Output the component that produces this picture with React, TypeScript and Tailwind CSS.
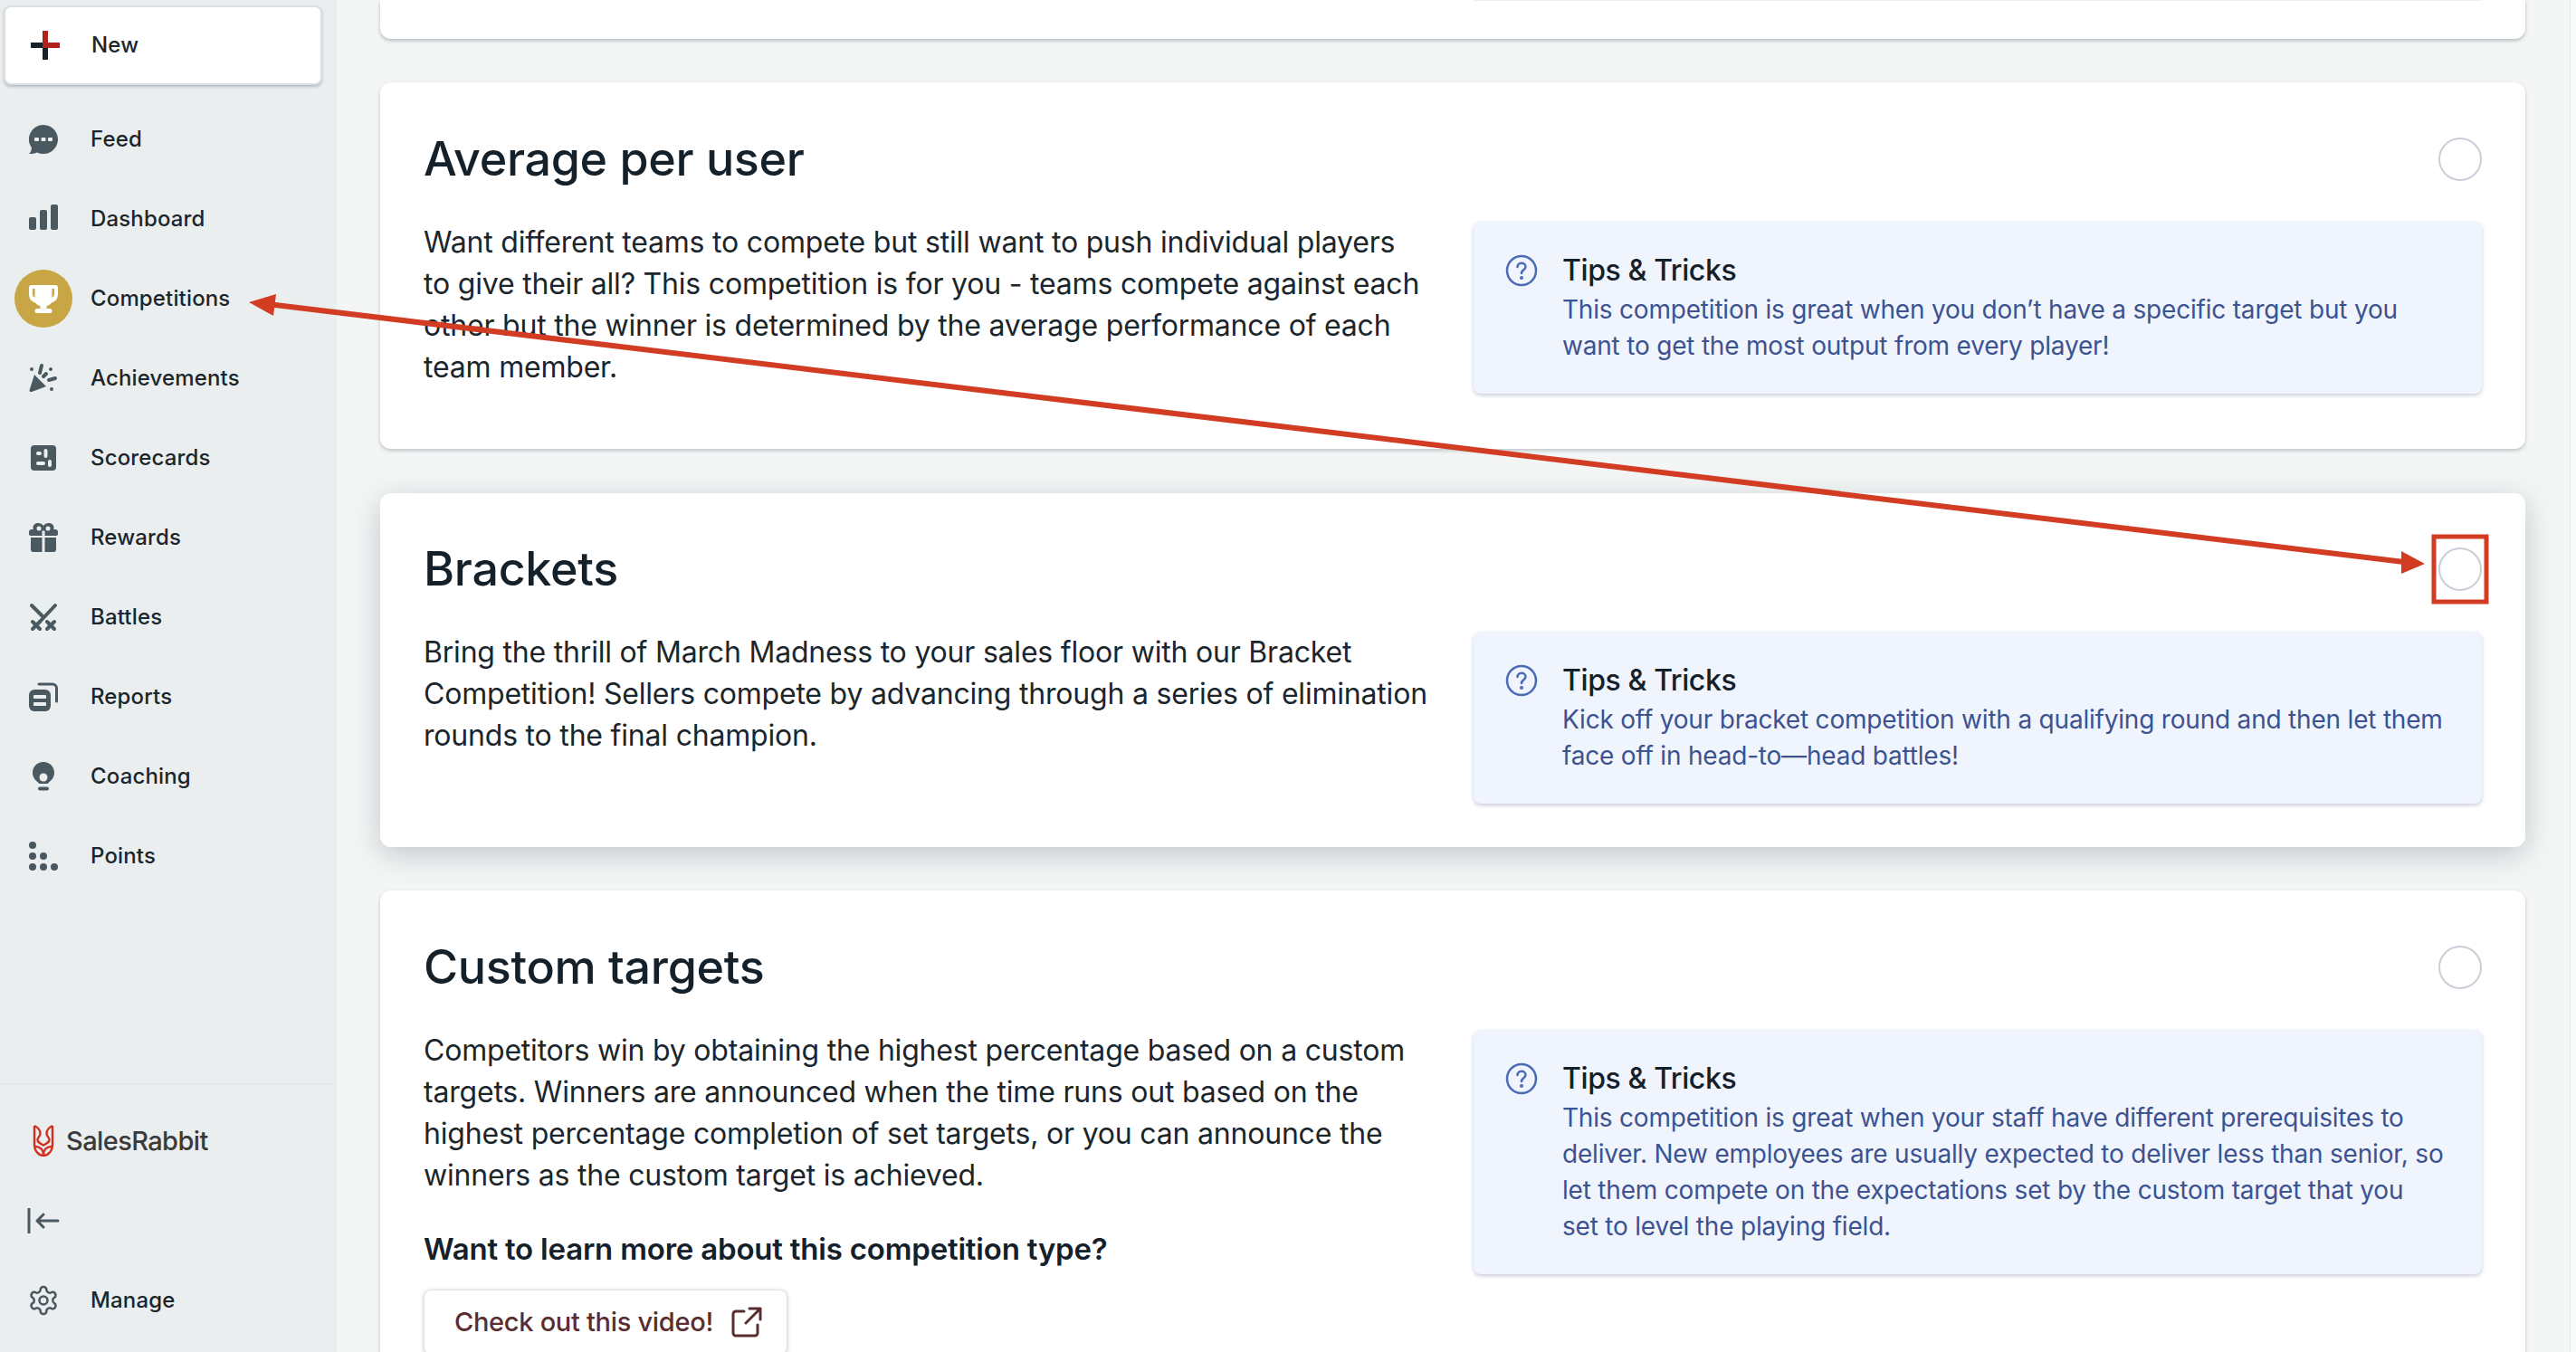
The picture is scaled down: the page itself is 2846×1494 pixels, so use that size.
import type { ReactNode } from "react";

const ink = "#4a5860";

function FeedIcon() {
  return (
    <svg width="32" height="32" viewBox="0 0 32 32">
      <path fill={ink} d="M16 0a16 16 0 1 1-7 30.4C6.5 31.300 3 32 0 32c1.800-1.600 3-4 2.900-6.800A16 16 0 0 1 16 0z" />
      <rect x="6" y="14" width="5" height="4" rx="1" fill="#ebeeef" />
      <rect x="13.500" y="14" width="5" height="4" rx="1" fill="#ebeeef" />
      <rect x="21" y="14" width="5" height="4" rx="1" fill="#ebeeef" />
    </svg>
  );
}

function DashboardIcon() {
  return (
    <svg width="32" height="32" viewBox="0 0 32 32" fill={ink}>
      <rect x="0" y="14" width="8" height="14" rx="2" />
      <rect x="12" y="6" width="8" height="22" rx="2" />
      <rect x="24" y="0" width="8" height="28" rx="2" />
    </svg>
  );
}

function TrophyIcon() {
  return (
    <svg width="32" height="34" viewBox="0 0 32 34" fill="none">
      <path fill="#fff" d="M3 2h26a3 3 0 0 1 3 3v7c0 5-3 8.500-7 9.500-1.300 1.700-3 2.900-5.500 3.500v3H23a2 2 0 0 1 0 5H9a2 2 0 0 1 0-5h3.500v-3c-2.500-.6-4.200-1.800-5.500-3.500C3 20.500 0 17 0 12V5a3 3 0 0 1 3-3z" />
      <path fill="#c8a645" d="M4 6h2.500v10C5 15 4 13.500 4 12zM25.500 6H28v6c0 1.500-1 3-2.500 4z" />
    </svg>
  );
}

function PartyIcon() {
  return (
    <svg width="32" height="32" viewBox="0 0 32 32" fill={ink}>
      <path d="M6 12l13 13L3 31c-1.600.5-2.800-.8-2.300-2.300z" strokeLinejoin="round" />
      <circle cx="3" cy="6" r="2" />
      <circle cx="24" cy="6" r="2" />
      <circle cx="25" cy="28" r="2" />
      <path d="M12 10l2-8" stroke={ink} strokeWidth="4" strokeLinecap="round" />
      <path d="M16 14l3-3" stroke={ink} strokeWidth="4" strokeLinecap="round" />
      <path d="M22 18l7-2" stroke={ink} strokeWidth="4" strokeLinecap="round" />
    </svg>
  );
}

function ScorecardIcon() {
  return (
    <svg width="32" height="32" viewBox="0 0 32 32">
      <rect x="2" y="2" width="28" height="28" rx="4" fill={ink} />
      <rect x="8" y="9" width="6" height="4" rx="2" fill="#ebeeef" />
      <rect x="16.500" y="6" width="4" height="10" rx="2" fill="#ebeeef" />
      <rect x="8" y="20" width="10" height="4" rx="2" fill="#ebeeef" />
      <rect x="21" y="18" width="4" height="8" rx="2" fill="#ebeeef" />
    </svg>
  );
}

function GiftIcon() {
  return (
    <svg width="32" height="32" viewBox="0 0 32 32" fill={ink}>
      <path d="M10 0c2.600 0 4.800 1.200 6 3.100C17.200 1.200 19.400 0 22 0c3.300 0 5.500 2.300 5.500 5 0 .7-.1 1.400-.4 2H29a3 3 0 0 1 3 3v2a2 2 0 0 1-2 2H17.500V8.500h-3V14H2a2 2 0 0 1-2-2v-2a3 3 0 0 1 3-3h1.900c-.3-.6-.4-1.300-.4-2 0-2.700 2.200-5 5.500-5z" />
      <path d="M2 16h12.500v16H5a3 3 0 0 1-3-3zM17.500 16H30v13a3 3 0 0 1-3 3h-9.500z" />
      <circle cx="11" cy="6" r="2.500" fill="#ebeeef" />
      <circle cx="21" cy="6" r="2.500" fill="#ebeeef" />
    </svg>
  );
}

function SwordsIcon() {
  return (
    <svg width="32" height="32" viewBox="0 0 32 32" fill="none" stroke={ink} strokeWidth="4" strokeLinecap="round">
      <path d="M3 3l13 13" />
      <path d="M29 3L12 21" />
      <path d="M4 21l8 8M12 21l-8 8" />
      <path d="M20 21l8 8M28 21l-8 8" />
    </svg>
  );
}

function ReportsIcon() {
  return (
    <svg width="32" height="32" viewBox="0 0 32 32" fill="none">
      <rect x="0" y="8" width="24" height="24" rx="6" fill={ink} />
      <rect x="5" y="14" width="14" height="4" rx="1" fill="#ebeeef" />
      <rect x="5" y="22" width="14" height="4" rx="1" fill="#ebeeef" />
      <path d="M11 2h15a4.500 4.500 0 0 1 4.500 4.500V21" stroke={ink} strokeWidth="3" strokeLinecap="round" />
    </svg>
  );
}

function BulbIcon() {
  return (
    <svg width="32" height="32" viewBox="0 0 32 32" fill={ink}>
      <path d="M16 0c7 0 12 5.200 12 11.800 0 4.600-2.500 8.200-6 10.600-.7.500-1 1-1 1.600H11c0-.6-.3-1.100-1-1.600-3.500-2.400-6-6-6-10.600C4 5.200 9 0 16 0z" />
      <circle cx="16" cy="17" r="4.500" fill="#ebeeef" />
      <rect x="10" y="27.500" width="12" height="4" rx="2" />
    </svg>
  );
}

function PointsIcon() {
  return (
    <svg width="32" height="32" viewBox="0 0 32 32" fill={ink}>
      <circle cx="4" cy="4" r="4" />
      <circle cx="4" cy="16" r="4" />
      <circle cx="16" cy="16" r="4" />
      <circle cx="4" cy="28" r="4" />
      <circle cx="16" cy="28" r="4" />
      <circle cx="28" cy="28" r="4" />
    </svg>
  );
}

function HelpIcon() {
  return (
    <svg width="36" height="36" viewBox="0 0 36 36" fill="none" stroke="#4a6bb5" strokeWidth="2.500" strokeLinecap="round">
      <circle cx="18" cy="18" r="16" />
      <path d="M13.500 14c0-2.600 2-4.300 4.500-4.300s4.500 1.700 4.500 4c0 3.600-4.500 3.600-4.500 7.300" />
      <circle cx="18" cy="26" r="0.800" fill="#4a6bb5" />
    </svg>
  );
}

const navItems: { label: string; icon: ReactNode; active?: boolean }[] = [
  { label: "Feed", icon: <FeedIcon /> },
  { label: "Dashboard", icon: <DashboardIcon /> },
  { label: "Competitions", icon: <TrophyIcon />, active: true },
  { label: "Achievements", icon: <PartyIcon /> },
  { label: "Scorecards", icon: <ScorecardIcon /> },
  { label: "Rewards", icon: <GiftIcon /> },
  { label: "Battles", icon: <SwordsIcon /> },
  { label: "Reports", icon: <ReportsIcon /> },
  { label: "Coaching", icon: <BulbIcon /> },
  { label: "Points", icon: <PointsIcon /> },
];

function Sidebar() {
  return (
    <aside className="flex h-full w-[372px] shrink-0 flex-col bg-[#ebeeef] text-[24px] font-medium tracking-[0.15px] text-[#1b262c]">
      <div className="ml-[4px] mt-[6px] flex h-[88px] w-[352px] items-center rounded-lg border-2 border-[#d9dfe2] bg-white shadow-[0_2px_3px_rgba(60,75,85,0.3)]">
        <span className="relative ml-[28px] h-8 w-8">
          <span className="absolute left-0 top-[13px] h-[6px] w-8 bg-[#14202a]" />
          <span className="absolute left-[13px] top-0 h-8 w-[6px] bg-[#14202a]" />
          <span className="absolute left-[13px] top-[13px] h-[6px] w-[19px] bg-[#b0231a]" />
          <span className="absolute left-[13px] top-0 h-[19px] w-[6px] bg-[#b0231a]" />
        </span>
        <span className="ml-[35px]">New</span>
      </div>
      <nav className="mt-[16px] flex flex-col">
        {navItems.map((item) => (
          <div key={item.label} className="flex h-[88px] items-center">
            <span className="flex w-[100px] justify-center pr-[4px]">
              {item.active ? (
                <span className="flex h-16 w-16 items-center justify-center rounded-full bg-[#c8a645]">{item.icon}</span>
              ) : (
                item.icon
              )}
            </span>
            <span>{item.label}</span>
          </div>
        ))}
      </nav>
      <div className="mt-auto border-t-2 border-[#e3e8ec] pb-[39px]">
        <div className="mt-[43px] flex items-center pl-[36px]">
          <svg width="24" height="36" viewBox="0 0 24 36" fill="none" stroke="#d22f1f" strokeWidth="2.400" strokeLinejoin="round">
            <path d="M2 2c4 2 6.500 5 6.500 8.500 0 3-3 4.500-3 7 0 2.500 2 3.500 6.500 6 4.500-2.500 6.500-3.500 6.500-6 0-2.500-3-4-3-7C15.500 7 18 4 22 2" />
            <path d="M2 2v21c0 7 5 12 10 12s10-5 10-12V2" />
            <path d="M3 25c5 0 9 3 9 10M21 25c-5 0-9 3-9 10" />
          </svg>
          <span className="ml-[13px] text-[29px] font-medium leading-none tracking-[-0.6px] text-[#3a3a3c]">SalesRabbit</span>
        </div>
        <svg className="ml-[30px] mt-[57px]" width="36" height="28" viewBox="0 0 36 28" fill="none" stroke={ink} strokeWidth="3" strokeLinecap="round" strokeLinejoin="round">
          <path d="M2 1v26" />
          <path d="M34 14H11M18 7l-7 7 7 7" />
        </svg>
        <div className="mt-[56px] flex h-[36px] items-center">
          <svg className="ml-[30px]" width="36" height="36" viewBox="0 0 24 24" fill="none" stroke={ink} strokeWidth="1.700" strokeLinecap="round" strokeLinejoin="round">
            <path d="M12.220 2h-.44a2 2 0 0 0-2 2v.18a2 2 0 0 1-1 1.730l-.43.250a2 2 0 0 1-2 0l-.15-.08a2 2 0 0 0-2.730.730l-.22.380a2 2 0 0 0 .730 2.730l.15.100a2 2 0 0 1 1 1.720v.510a2 2 0 0 1-1 1.740l-.15.090a2 2 0 0 0-.730 2.730l.22.380a2 2 0 0 0 2.730.730l.15-.08a2 2 0 0 1 2 0l.43.250a2 2 0 0 1 1 1.730V20a2 2 0 0 0 2 2h.44a2 2 0 0 0 2-2v-.18a2 2 0 0 1 1-1.730l.43-.25a2 2 0 0 1 2 0l.15.080a2 2 0 0 0 2.730-.730l.22-.390a2 2 0 0 0-.730-2.730l-.15-.08a2 2 0 0 1-1-1.740v-.5a2 2 0 0 1 1-1.740l.15-.09a2 2 0 0 0 .730-2.730l-.22-.380a2 2 0 0 0-2.730-.730l-.15.080a2 2 0 0 1-2 0l-.43-.25a2 2 0 0 1-1-1.730V4a2 2 0 0 0-2-2z" />
            <circle cx="12" cy="12" r="3" />
          </svg>
          <span className="ml-[34px]">Manage</span>
        </div>
      </div>
    </aside>
  );
}

function Tips({ lines }: { lines: string[] }) {
  return (
    <div className="flex w-[1114px] shrink-0 gap-[27px] self-start rounded-lg bg-[#f0f4fd] pb-[33px] pl-[35px] pt-[34px] shadow-[0_2px_4px_rgba(60,75,110,0.28)]">
      <span className="mt-[2px]">
        <HelpIcon />
      </span>
      <div>
        <div className="mb-[3px] text-[32px] font-medium leading-[40px] tracking-[-0.4px] text-[#14202a]">Tips &amp; Tricks</div>
        {lines.map((line) => (
          <div key={line} className="whitespace-nowrap text-[28px] leading-[40px] tracking-[-0.2px] text-[#3c5390]">
            {line}
          </div>
        ))}
      </div>
    </div>
  );
}

function Card({
  title,
  lines,
  tips,
  className,
  children,
}: {
  title: string;
  lines: string[];
  tips: string[];
  className: string;
  children?: ReactNode;
}) {
  return (
    <section className={`shrink-0 rounded-xl bg-white px-[48px] ${className}`}>
      <div className="flex h-[48px] items-center justify-between">
        <h2 className="text-[52px] font-medium tracking-[-0.3px] text-[#14202a]">{title}</h2>
        <span className="h-[48px] w-[48px] rounded-full border-2 border-[#c9ced9]" />
      </div>
      <div className="mt-[45px] flex justify-between">
        <div className="w-[1110px]">
          {lines.map((line) => (
            <p key={line} className="whitespace-nowrap text-[32px] leading-[46px] tracking-[-0.2px] text-[#1b262c]">
              {line}
            </p>
          ))}
          {children}
        </div>
        <Tips lines={tips} />
      </div>
    </section>
  );
}

export default function App() {
  return (
    <div className="relative flex h-[1494px] w-[2846px] overflow-hidden bg-[#f4f6f6] font-['Inter',sans-serif]">
      <Sidebar />
      <main className="flex h-full flex-1 flex-col pl-[48px] pr-[49px]">
        <div className="h-[43px] w-full shrink-0 rounded-b-xl bg-white shadow-[0_2px_4px_rgba(60,75,85,0.35)]">
          <div className="ml-[1208px] h-px w-[1114px] bg-[#eceff4]" />
        </div>
        <Card
          title="Average per user"
          className="mt-[48px] h-[405px] pt-[61px] shadow-[0_2px_4px_rgba(60,75,85,0.3)]"
          lines={[
            "Want different teams to compete but still want to push individual players",
            "to give their all? This competition is for you - teams compete against each",
            "other but the winner is determined by the average performance of each",
            "team member.",
          ]}
          tips={[
            "This competition is great when you don’t have a specific target but you",
            "want to get the most output from every player!",
          ]}
        />
        <Card
          title="Brackets"
          className="mt-[49px] h-[391px] pt-[60px] shadow-[0_8px_32px_rgba(60,75,85,0.28)]"
          lines={[
            "Bring the thrill of March Madness to your sales floor with our Bracket",
            "Competition! Sellers compete by advancing through a series of elimination",
            "rounds to the final champion.",
          ]}
          tips={[
            "Kick off your bracket competition with a qualifying round and then let them",
            "face off in head-to—head battles!",
          ]}
        />
        <Card
          title="Custom targets"
          className="mt-[48px] h-[600px] pt-[61px] shadow-[0_2px_4px_rgba(60,75,85,0.3)]"
          lines={[
            "Competitors win by obtaining the highest percentage based on a custom",
            "targets. Winners are announced when the time runs out based on the",
            "highest percentage completion of set targets, or you can announce the",
            "winners as the custom target is achieved.",
          ]}
          tips={[
            "This competition is great when your staff have different prerequisites to",
            "deliver. New employees are usually expected to deliver less than senior, so",
            "let them compete on the expectations set by the custom target that you",
            "set to level the playing field.",
          ]}
        >
          <p className="mt-[35px] text-[33px] font-semibold leading-[46px] tracking-[-0.2px] text-[#14202a]">
            Want to learn more about this competition type?
          </p>
          <div className="mt-[22px] flex h-[72px] w-[402px] items-center gap-[20px] rounded-lg border border-[#dde2e6] bg-white pl-[33px] shadow-[0_1px_4px_rgba(60,75,85,0.3)]">
            <span className="text-[29px] font-medium tracking-[-0.3px] text-[#5a2e30]">Check out this video!</span>
            <svg width="34" height="34" viewBox="0 0 34 34" fill="none" stroke="#5a2e30" strokeWidth="3" strokeLinecap="round" strokeLinejoin="round">
              <path d="M14 5H5a3 3 0 0 0-3 3v21a3 3 0 0 0 3 3h21a3 3 0 0 0 3-3v-9" />
              <path d="M20 2h12v12M32 2L16 18" />
            </svg>
          </div>
        </Card>
      </main>
      <div className="h-full w-[7px] shrink-0 border-l border-[#e6e9ea] bg-[#f8f9f9]" />
      <svg className="pointer-events-none absolute left-0 top-0" width="2846" height="1494" fill="none">
        <path d="M300 336.500L2656 621" stroke="#d23c22" strokeWidth="6" />
        <path d="M275 334L305 325L302 349Z" fill="#d23c22" />
        <path d="M2679 623L2653 609V634Z" fill="#d23c22" />
        <rect x="2689" y="593" width="58" height="72" stroke="#d23c22" strokeWidth="5" />
      </svg>
    </div>
  );
}
